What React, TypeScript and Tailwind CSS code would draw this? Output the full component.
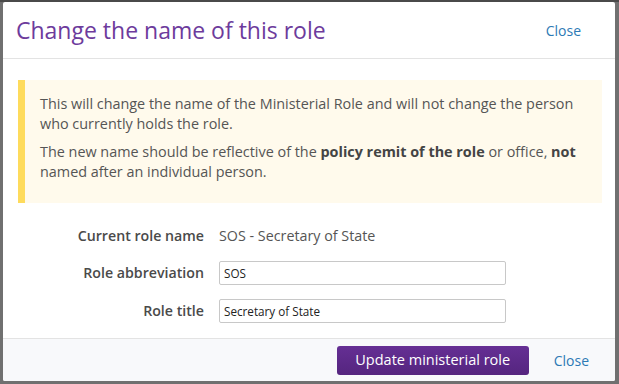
import React from "react";

type RowProps = {
  label: string;
  children: React.ReactNode;
  className?: string;
};

function FormRow({ label, children, className }: RowProps) {
  return (
    <div className={`flex items-center ${className ?? ""}`}>
      <label className="w-[216px] pr-[15px] text-right text-[14.2px] font-semibold text-[#4a4a4a]">
        {label}
      </label>
      {children}
    </div>
  );
}

function TextInput({ value }: { value: string }) {
  return (
    <input
      defaultValue={value}
      className="h-[24px] w-[287px] rounded-[2px] border border-[#c8c8c8] bg-white px-[4px] text-[11.7px] text-[#222] outline-none"
    />
  );
}

export default function App() {
  return (
    <div
      className="h-[384px] w-[619px] overflow-hidden border-t-2 border-[#4a4a4a] bg-[#707070] pl-[3px]"
      style={{ fontFamily: '"Open Sans", "Liberation Sans", sans-serif' }}
    >
      <div className="flex h-[379px] w-[612px] flex-col rounded-[2px] bg-white">
        <header className="flex h-[57px] items-center justify-between border-b border-[#e3e3e3] pl-[13px] pr-[34px]">
          <h1 className="text-[23px] leading-none text-[#6d3b9c]">
            Change the name of this role
          </h1>
          <a className="text-[14px] text-[#2d7ab5]">Close</a>
        </header>

        <div className="flex-1 pb-[14px]">
          <div className="ml-[15px] mr-[13px] mt-[21px] border-l-[7px] border-[#fedb5c] bg-[#fffaec] pl-[15px] pr-[12px] pt-[14px] pb-[21px] text-[14.4px] leading-[20px] text-[#555]">
            <p className="mb-[8px]">
              This will change the name of the Ministerial Role and will not
              change the person who currently holds the role.
            </p>
            <p>
              The new name should be reflective of the{" "}
              <strong className="font-bold text-[#444]">
                policy remit of the role
              </strong>{" "}
              or office, <strong className="font-bold text-[#444]">not</strong>{" "}
              named after an individual person.
            </p>
          </div>

          <FormRow label="Current role name" className="mt-[21px] h-[24px]">
            <span className="text-[14.3px] text-[#555]">
              SOS - Secretary of State
            </span>
          </FormRow>
          <FormRow label="Role abbreviation" className="mt-[13px]">
            <TextInput value="SOS" />
          </FormRow>
          <FormRow label="Role title" className="mt-[14px]">
            <TextInput value="Secretary of State" />
          </FormRow>
        </div>

        <footer className="flex h-[43px] items-center justify-end gap-[25px] rounded-b-[2px] border-t border-[#e3e3e3] bg-[#f8f9fb] pr-[26px]">
          <button className="h-[29px] w-[192px] rounded-[3px] bg-gradient-to-b from-[#652f94] to-[#55257f] text-[14.5px] text-white">
            Update ministerial role
          </button>
          <a className="text-[14px] text-[#2d7ab5]">Close</a>
        </footer>
      </div>
    </div>
  );
}
